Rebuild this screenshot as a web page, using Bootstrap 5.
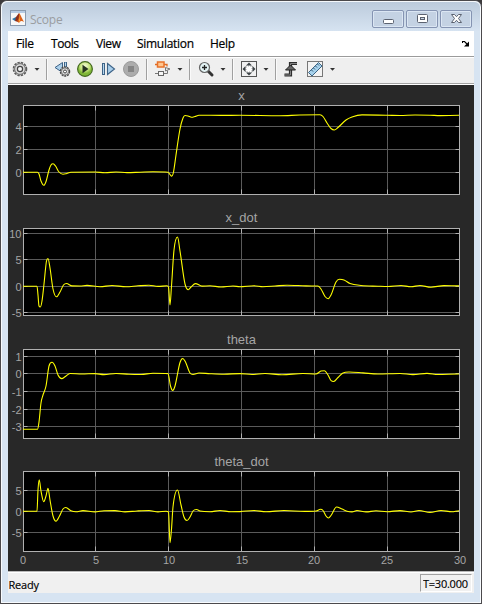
<!DOCTYPE html>
<html lang="en">
<head>
<meta charset="utf-8">
<meta name="viewport" content="width=device-width, initial-scale=1">
<title>Scope</title>
<link href="https://cdn.jsdelivr.net/npm/bootstrap@5.3.0/dist/css/bootstrap.min.css" rel="stylesheet">
<style>
body{background:#3c3a3c;font-family:"Open Sans","Noto Sans",sans-serif;color:#000;line-height:1}
.win{width:482px;height:604px;background:#d7e4f2;border:1px solid #4b494c;border-radius:7px 7px 0 0;padding:0 7px 10px;box-shadow:inset 1px 1px 0 #f8fbfe,inset -1px -1px 0 #f8fbfe}
.titlebar{height:30px;margin:0 -6px;padding:0 8px 0 8px;border-radius:6px 6px 0 0;background:linear-gradient(#bccbdc,#d6e3f1);border-top:1px solid #f5f8fb}
.app-name{font-size:12px;color:#9a9da1;margin-left:4px;letter-spacing:-.25px;padding-top:8px}
.ctl{width:32px;height:18px;border:1px solid #8594b2;border-radius:2px;box-shadow:inset 0 0 0 1px #dbe6f3;margin-left:2px;background:#c4d2e3}
.menubar{height:25px;background:#fff;font-size:12px;padding-left:8px}
.tools{height:29px;background:#efefef;border-top:1px solid #9b9b9b;border-bottom:1px solid #fff;box-shadow:inset 0 1px #fff,inset 0 -1px #a3a3a3;padding:0 0 3px 3px}
.tools svg{flex:none}
.tools .ico{width:18px;height:18px}
.tools .car{width:8px;height:18px;margin:0 5px 0 4px}
.g4{margin-left:4px}.g5{margin-left:5px}.g6{margin-left:6px}.g7{margin-left:7px}
.sep{width:1px;height:21px;background:#a0a0a0;box-shadow:1px 0 #fafafa;flex:none}
.scope{background:#282828;height:487px}
.scope svg{display:block}
.scope text{font-family:"Liberation Sans",Arial,sans-serif;font-size:11px;fill:#a5a5a5}
.scope .ttl{font-size:13px;text-anchor:middle}
.status{height:21px;background:#f0f0f0;border-top:1px solid #fff;box-shadow:0 -1px #b9b9b9;font-size:11px}
.status text{stroke:#000;stroke-width:.15}
.clock{width:52px;height:18px;border:1px solid #fff;border-top-color:#a0a0a0;border-left-color:#a0a0a0;margin-right:2px;padding-left:2px}
</style>
<script src="https://cdn.jsdelivr.net/npm/bootstrap@5.3.0/dist/js/bootstrap.bundle.min.js"></script>
</head>
<body class="overflow-hidden">
<div class="win d-flex flex-column">
  <div class="titlebar d-flex align-items-start">
    <svg width="16" height="16" class="mt-2 flex-shrink-0" viewBox="0 0 16 16"><rect x=".5" y=".5" width="15" height="15" fill="#f7f7f7" stroke="#8a9aae"/><path d="M1 2h14" stroke="#b5cbe4" stroke-width="2"/><path d="M2 9l4-2 2 2-3 2z" fill="#2d74a8"/><path d="M6 7l3-4 1 3-2 6-3-1z" fill="#8c2f1c"/><path d="M9 3c2 2 3 6 5 9-2-1-3-2-5 1l-2-2c2-1 2-5 2-8z" fill="#dc6118"/><path d="M9 5l1 6-1 1z" fill="#f8b33a"/></svg>
    <div class="app-name mt-1">Scope</div>
    <div class="d-flex ms-auto mt-2">
      <div class="ctl d-flex align-items-center justify-content-center"><svg width="13" height="14"><rect x="1.5" y="7.500" width="10" height="4" rx="1" fill="#fff" stroke="#5b6270"/></svg></div>
      <div class="ctl d-flex align-items-center justify-content-center"><svg width="13" height="12"><rect x="1.500" y="1.500" width="10" height="8" rx="1" fill="#fff" stroke="#5b6270"/><rect x="4.500" y="4.500" width="4" height="2" fill="#c9d5e4" stroke="#5b6270"/></svg></div>
      <div class="ctl d-flex align-items-center justify-content-center"><svg width="13" height="12"><path d="M1.500 1.500h3l2 2.200 2-2.200h3l-3 4 3 4h-3l-2-2.200-2 2.200h-3l3-4z" fill="#fff" stroke="#5b6270"/></svg></div>
    </div>
  </div>
  <div class="menubar d-flex align-items-center flex-shrink-0">
    <svg width="440" height="25"><g font-size="12" fill="#000" stroke="#000" stroke-width=".2"><text x="0" y="17" textLength="18">File</text><text x="35" y="17" textLength="28">Tools</text><text x="80" y="17" textLength="25">View</text><text x="121" y="17" textLength="57">Simulation</text><text x="194" y="17" textLength="25">Help</text></g></svg>
    <svg width="8" height="8" viewBox="0 0 8 8" class="ms-auto me-1"><path d="M.5 3V1.500h2L5 4" fill="none" stroke="#000" stroke-width="1.200"/><path d="M2 6.500h5V1.500z"/></svg>
  </div>
  <div class="tools d-flex align-items-center flex-shrink-0">
    <svg class="ico" viewBox="0 0 18 18"><circle cx="9" cy="9" r="6.500" fill="none" stroke="#5b5b5b" stroke-width="1.600" stroke-dasharray="2.400 1.003"/><circle cx="9" cy="9" r="5.400" fill="#d8d8d8" stroke="#5b5b5b" stroke-width=".9"/><circle cx="9" cy="9" r="2.600" fill="#f4f4f4" stroke="#444" stroke-width="1.200"/></svg>
    <svg class="car" viewBox="0 0 8 18"><path d="M1.500 8h5L4 10.800z" fill="#333"/></svg><i class="sep"></i>
    <svg class="ico g6" viewBox="0 0 18 18"><path d="M9.500 2.500v10L2 7.500z" fill="#acd0eb" stroke="#3d6387"/><path d="M12.500 2v8" stroke="#3d6387" stroke-width="3"/><path d="M12.500 2.500v7" stroke="#b7d7ee"/><circle cx="12" cy="11.500" r="4.500" fill="#ddd" stroke="#4b4b4b" stroke-width="1.500" stroke-dasharray="2 .83"/><circle cx="12" cy="11.500" r="3.600" fill="#ddd" stroke="#555" stroke-width=".7"/><circle cx="12" cy="11.500" r="1.500" fill="#fff" stroke="#444"/></svg>
    <svg class="ico g5" viewBox="0 0 18 18"><defs><radialGradient id="gr" cy=".3"><stop stop-color="#f4fbd8"/><stop offset=".65" stop-color="#c3e37a"/><stop offset="1" stop-color="#7fb636"/></radialGradient></defs><circle cx="9" cy="9" r="7.400" fill="url(#gr)" stroke="#43681f" stroke-width="1.100"/><path d="M6.500 4.800v8.400L12.500 9z" fill="#26331f"/></svg>
    <svg class="ico g6" viewBox="0 0 18 18"><rect x="2.500" y="3.500" width="2" height="11" fill="#b5d5ed" stroke="#3d6387"/><path d="M7.500 3.500v11L14.500 9z" fill="#a7cdea" stroke="#3d6387" stroke-width="1.100"/></svg>
    <svg class="ico g4" viewBox="0 0 18 18"><circle cx="9" cy="9" r="7.500" fill="#acacac" stroke="#9b9b9b"/><rect x="6" y="6" width="6" height="6" fill="#858585"/></svg><i class="sep g6"></i>
    <svg class="ico g7" viewBox="0 0 18 18"><path d="M1 13.500h4M10 13.500h3.500v-3" fill="none" stroke="#777"/><path d="M1 4.500h4M10 4.500h3v2" fill="none" stroke="#df6b23" stroke-width="1.300"/><rect x="3.500" y="2" width="6.500" height="5" fill="#ffc690" stroke="#e8722a" stroke-width="1.500"/><rect x="4.500" y="11.500" width="5" height="4" fill="#f6f6f6" stroke="#666"/><path d="M11.500 7.500v3.500L16 9z" fill="#eee" stroke="#777"/></svg>
    <svg class="car" viewBox="0 0 8 18"><path d="M1.500 8h5L4 10.800z" fill="#333"/></svg><i class="sep"></i>
    <svg class="ico g7" viewBox="0 0 18 18"><path d="M11 11l4 4" stroke="#333" stroke-width="3" stroke-linecap="round"/><circle cx="7.500" cy="7.500" r="5" fill="#e3f3f4" stroke="#666" stroke-width="1.200"/><path d="M5 7.500h5M7.500 5v5" stroke="#222" stroke-width="1.300"/></svg>
    <svg class="car" viewBox="0 0 8 18"><path d="M1.500 8h5L4 10.800z" fill="#333"/></svg><i class="sep"></i>
    <svg class="ico g7" viewBox="0 0 18 18"><rect x="1.500" y="1.500" width="15" height="15" fill="#f0f0f0" stroke="#555"/><rect x="6" y="6" width="6" height="6" fill="#fff" stroke="#aaa" stroke-dasharray="1 1"/><path d="M9 2.500l3 3H6zM9 15.500l-3-3h6zM2.500 9l3-3v6zM15.500 9l-3-3v6z" fill="#3c4246"/></svg>
    <svg class="car" viewBox="0 0 8 18"><path d="M1.500 8h5L4 10.800z" fill="#333"/></svg><i class="sep"></i>
    <svg class="ico g6" viewBox="0 0 18 18"><path d="M2.500 15h6V3.500h6.500" fill="none" stroke="#2e2e2e" stroke-width="3.200"/><path d="M2 15h6.500V3.500H15" fill="none" stroke="#858585"/><path d="M8.500 5l5 5h-10z" fill="#666" stroke="#222"/></svg>
    <svg class="ico g6" viewBox="0 0 18 18"><rect x="1.500" y="1.500" width="15" height="15" fill="#f3f3f3" stroke="#777"/><path d="M2.500 12.500l10-10 3.500 3.500-10 10z" fill="#a7d2ec" stroke="#3b6484"/><path d="M5.500 10l1.500 1.500M7.500 8L9 9.500M9.500 6L11 7.500M11.500 4L13 5.500" stroke="#315673"/></svg>
    <svg class="car" viewBox="0 0 8 18"><path d="M2 8h5L4.500 10.800z" fill="#333"/></svg>
  </div>
  <div class="scope flex-shrink-0" id="scope"></div>
  <div class="status d-flex align-items-center justify-content-between flex-shrink-0">
    <svg width="60" height="20"><text x="0.500" y="16" textLength="30.500">Ready</text></svg>
    <div class="clock d-flex"><svg width="48" height="16"><text x="0" y="13" textLength="45">T=30.000</text></svg></div>
  </div>
</div>
<script>
// Each plot keeps its frame, grid rows and trace in window pixel units.
const plots = [
 {title:'x', y0:85, h:120, ty:100, top:105.5, bot:194.5, rows:[[4,126.5],[2,149.5],[0,172.5]],
  pts:'23,172.3 37.5,172.3 39,174 41,181 43.8,185.3 46.2,181 49,170 51,165 53,163.8 55.5,166 59,172 63,174.3 66,173.8 71,172.2 95,172 105,172.7 116,172 127,172.6 140,172.2 153,171.8 168,172.2 170,174.5 171.7,176.2 173.5,172 176,155 180,129 183,118 185,115.5 188,116 191.500,117.300 195,116.5 199,115.2 222,115.4 240,115.3 280,115.7 300,115 320,114.8 323,116.5 327,123 331,128.5 334.3,130 338,127.500 346,120 352,117 362,114.900 387,115.200 400,115.500 415,115 430,115.200 440,115.600 459,115.300'},
 {title:'x_dot', y0:205, h:120, ty:222, top:228.5, bot:315.5, rows:[[10,233.5],[5,259.5],[0,286.5],[-5,312.5]],
  pts:'23,286.2 37,286.2 38,295 39,306 40.3,307 42,301 44,284 46.500,261 48,258.500 50,268 53,289 56.500,296.800 60,292 63.500,285 66.500,283.500 72,285.900 80,286 87,285.400 100,286.700 112,285.500 126,286.700 138,285.800 149,285.200 158,286.400 167,285.800 168.500,287 170,305 171.500,286 174,250 177.500,237 180,251 185,284 188.300,289.700 191,287 195.500,283.600 202,286.100 210,285.800 221,287 233,286 240,286.700 254,285.700 263,286.700 275,286 287,285.200 306,285.900 318,286 321,289 325,296.500 328.300,298.700 331,295 336,282 339.500,279.300 344,280 350,283.500 361,285.500 378,286.200 388,286.500 401,285.500 411,286.700 420,285.500 431,287.200 444,285.600 459,285.900'},
 {title:'theta', y0:325, h:125, ty:344, top:349.5, bot:438.5, rows:[[1,356.5],[0,373.5],[-1,391.5],[-2,409.5],[-3,426.5]],
  pts:'23,429.3 37.500,429.300 39,422 41,403 43,395 46,386 49,366 52,362.200 55,366 58,375 61.800,378.600 65,376.800 70,373.500 82,374 95,373.600 104,374.600 116,373.500 129,374.300 141,374.500 153,373.300 168,373.600 170.500,386 172.700,390.500 175,386 180,362.500 182.700,358.500 185.500,362 190,373 193,374.500 199,373 210,373.700 224,374.200 240,373.600 252,374.500 265,373.500 282,374.700 303,373.500 316,374 321,371 324.500,370.700 328,375 331,380.500 333.700,381.500 338,377.500 343,373 349,372 363,372.900 378,374 400,373.500 413,374.600 427,373.400 438,374.500 459,374'},
 {title:'theta_dot', y0:450, h:122, ty:466, top:471.5, bot:551.5, rows:[[5,490.5],[0,511.5],[-5,532.5]], axis:true,
  pts:'23,511.300 37,511.300 38,490 39.200,479.800 41,491 43.700,501.700 46,496 48,488.200 50,500 53,516 56,521.200 59.500,516 63,509 65.800,507.500 71,510.800 76,511.800 83,510.600 95,511.900 104,510.700 115,510.600 125,511.900 137,511 149,510.500 158,511.900 166,511.200 168.500,512 170,542.700 171.500,529 173,507 177.500,490 181,505 184,517 187,520.500 190,517 193,511 196.500,509.500 200,511 210,511.700 220,510.500 231,511.700 240,511.600 254,510.500 266,511.700 284,510.500 305,511.400 316,511 320.500,509.300 323,510.500 326,516 328.500,518 331,515.500 336.500,507 342,509 347,511.200 352,511.900 357,510.500 366,511.900 376,510.800 387,511.700 400,510.600 411,512 419,510.500 430,512.400 441,510.500 452,511.800 459,510.700'}
];
const cols = [95.5,168.5,241.5,314.5,387.5];

// Monotone cubic path: peaks stay exactly on the sampled points.
function curve(str){
  const p = str.split(' ').map(s => s.split(',').map(Number));
  const s = [], m = [];
  for (let i=0;i<p.length-1;i++) s.push((p[i+1][1]-p[i][1])/(p[i+1][0]-p[i][0]));
  for (let i=0;i<p.length;i++) {
    if (i===0||i===p.length-1||s[i-1]*s[i]<=0) { m.push(0); continue; }
    const mean = (s[i-1]+s[i])/2, cap = 3*Math.min(Math.abs(s[i-1]),Math.abs(s[i]));
    m.push(Math.sign(mean)*Math.min(Math.abs(mean),cap));
  }
  let d = `M${p[0]}`;
  for (let i=0;i<s.length;i++){
    const h=(p[i+1][0]-p[i][0])/3;
    d += `C${p[i][0]+h} ${p[i][1]+m[i]*h} ${p[i+1][0]-h} ${p[i+1][1]-m[i+1]*h} ${p[i+1]}`;
  }
  return d;
}
document.getElementById('scope').innerHTML = plots.map(q => {
  let grid='', ticks='', labels='';
  cols.forEach(x => { grid+=`M${x} ${q.top}V${q.bot}`; ticks+=`M${x} ${q.top}v5M${x} ${q.bot}v-5`; });
  q.rows.forEach(([v,y]) => { grid+=`M23.5 ${y}H459.5`; ticks+=`M23.5 ${y}h4M459.5 ${y}h-4`; labels+=`<text x="21.500" y="${y+4}" text-anchor="end">${v}</text>`; });
  if (q.axis) [0,5,10,15,20,25,30].forEach((v,i) => labels+=`<text x="${[23,96,169,242,314,387,460][i]}" y="564" text-anchor="middle">${v}</text>`);
  return `<svg width="466" height="${q.h}" viewBox="8 ${q.y0} 466 ${q.h}">
   <rect x="23.5" y="${q.top}" width="436" height="${q.bot-q.top}" fill="#000"/>
   <path d="${grid}" stroke="#5a5a5a" fill="none"/><path d="${ticks}" stroke="#b0b0b0" fill="none"/>
   <rect x="23.5" y="${q.top}" width="436" height="${q.bot-q.top}" fill="none" stroke="#b0b0b0"/>
   <path d="${curve(q.pts)}" fill="none" stroke="#ff0" stroke-width="1.1"/>
   <text class="ttl" x="241.5" y="${q.ty}">${q.title}</text>${labels}</svg>`;
}).join('');
</script>
</body>
</html>
